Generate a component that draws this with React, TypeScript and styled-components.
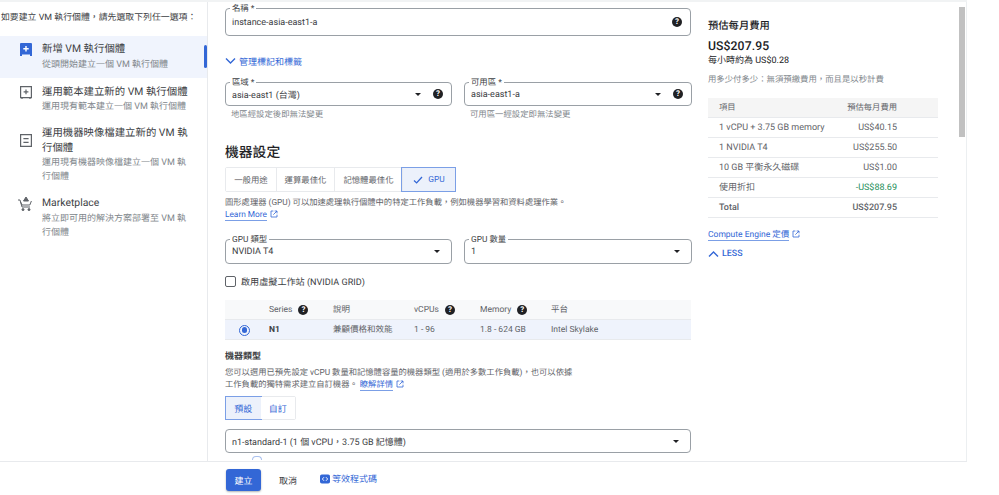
import React from "react";
import styled, { createGlobalStyle } from "styled-components";

const Global = createGlobalStyle`
  html, body { margin: 0; padding: 0; background: #fff; }
  body { font-family: Roboto, "Noto Sans CJK TC", sans-serif; color: #3c4043; text-rendering: geometricPrecision; }
  * { box-sizing: border-box; }
`;

const Page = styled.div`
  position: relative;
  width: 999px;
  height: 495px;
  overflow: hidden;
  display: flex;
  flex-direction: column;
  background: #fff;
`;
const TopStrip = styled.div`
  height: 2px;
  width: 967px;
  flex: none;
  background: #f1f3f4;
`;
const Shell = styled.div`
  width: 967px;
  flex: 1;
  min-height: 0;
  display: grid;
  grid-template-columns: 208px 500px 1fr;
  border-right: 1px solid #eceff1;
  overflow: hidden;
`;
const Sidebar = styled.aside`
  border-right: 1px solid #e8eaed;
  padding-top: 9px;
`;
const SideTitle = styled.div`
  font-size: 8.9px;
  line-height: 14px;
  color: #3c4043;
  padding-left: 1px;
  white-space: nowrap;
`;
const SideList = styled.div`
  margin-top: 11px;
  display: flex;
  flex-direction: column;
`;
const SideItem = styled.div<{ $active?: boolean }>`
  position: relative;
  display: grid;
  grid-template-columns: 42px 1fr;
  padding: ${(p) => (p.$active ? "6px 19px 6px 0" : "7px 19px 5px 0")};
  background: ${(p) => (p.$active ? "#f0f4fd" : "transparent")};
`;
const SideIcon = styled.div<{ $mt?: number }>`
  display: flex;
  justify-content: center;
  align-items: flex-start;
  padding: ${(p) => p.$mt ?? 0}px 0 0 9px;
  color: #5f6368;
`;
const ActiveBar = styled.span`
  position: absolute;
  right: 0;
  top: 9px;
  width: 3px;
  height: 23px;
  border-radius: 2px;
  background: #3367d6;
`;
const ItemTitle = styled.div`
  font-size: 10.4px;
  line-height: 14.5px;
  color: #3c4043;
`;
const ItemSub = styled.div`
  font-size: 9px;
  line-height: 14px;
  color: #80868b;
  margin-top: 1px;
`;

const Main = styled.main`
  padding: 6px 17px 0 17px;
  min-width: 0;
  overflow: hidden;
`;
const FieldBox = styled.div<{ $h: number }>`
  position: relative;
  height: ${(p) => p.$h}px;
  border: 1px solid #9aa0a6;
  border-radius: 4px;
  display: flex;
  align-items: center;
  padding: 0 8px 0 6px;
  gap: 9px;
  font-size: 9px;
  color: #3c4043;
  background: #fff;
`;
const FieldLabel = styled.span`
  position: absolute;
  left: 4px;
  top: -4px;
  padding: 0 2px;
  font-size: 8.4px;
  line-height: 9px;
  background: #fff;
  color: #3c4043;
`;
const FieldValue = styled.span`
  flex: 1;
  white-space: nowrap;
  padding-top: 1px;
`;
const Caret = styled.span`
  width: 0;
  height: 0;
  border-left: 3.5px solid transparent;
  border-right: 3.5px solid transparent;
  border-top: 3.5px solid #202124;
  margin-right: 3px;
`;
const HelpBadge = styled.span`
  flex: none;
  width: 10px;
  height: 10px;
  border-radius: 50%;
  background: #202124;
  color: #fff;
  font-size: 8px;
  font-weight: 700;
  line-height: 10px;
  text-align: center;
  font-family: Roboto, sans-serif;
`;
const DisclosureLink = styled.div`
  margin-top: 18px;
  display: flex;
  align-items: center;
  gap: 3px;
  height: 14px;
  font-size: 9px;
  color: #3367d6;
`;
const TwoCol = styled.div<{ $mt: number }>`
  margin-top: ${(p) => p.$mt}px;
  display: grid;
  grid-template-columns: 227px 228px;
  gap: 12px;
`;
const Hint = styled.div`
  font-size: 8.4px;
  line-height: 12px;
  color: #80868b;
  margin: 3px 0 0 6px;
`;
const SectionTitle = styled.h2`
  margin: 22px 0 0;
  font-size: 13.8px;
  line-height: 20px;
  font-weight: 500;
  color: #202124;
`;
const Tabs = styled.div`
  margin-top: 4px;
  display: inline-flex;
  height: 25px;
  border: 1px solid #e8eaed;
  border-radius: 2px;
  vertical-align: top;
`;
const Tab = styled.div<{ $w: number; $on?: boolean }>`
  width: ${(p) => p.$w}px;
  display: flex;
  align-items: center;
  justify-content: center;
  gap: 5px;
  font-size: 8.4px;
  color: ${(p) => (p.$on ? "#3367d6" : "#5f6368")};
  border-left: 1px solid #e8eaed;
  background: ${(p) => (p.$on ? "#ecf1fb" : "#fff")};
  outline: ${(p) => (p.$on ? "1px solid #7b9fe6" : "none")};
  &:first-child { border-left: 0; }
`;
const Desc = styled.div`
  font-size: 8.3px;
  line-height: 11.5px;
  color: #5f6368;
`;
const DescGpu = styled(Desc)`
  margin-top: 6px;
`;
const DocLink = styled.span`
  color: #3367d6;
  border-bottom: 1px solid #7b9fe6;
`;
const ExtIcon = styled.span`
  display: inline-flex;
  vertical-align: -1px;
  margin-left: 3px;
  color: #3367d6;
`;
const CheckRow = styled.label`
  margin-top: 10px;
  display: flex;
  align-items: center;
  gap: 5px;
  height: 14px;
  font-size: 9.1px;
  color: #3c4043;
`;
const Check = styled.span`
  width: 11px;
  height: 11px;
  border: 1.2px solid #5f6368;
  border-radius: 2px;
`;
const SeriesTable = styled.div`
  margin-top: 12px;
  width: 466px;
`;
const SeriesRow = styled.div<{ $head?: boolean }>`
  display: grid;
  grid-template-columns: 44px 64px 81px 66px 71px 1fr;
  align-items: center;
  height: 20px;
  padding-top: 1px;
  font-size: 8.5px;
  line-height: 12px;
  color: #5f6368;
  background: ${(p) => (p.$head ? "#f8f9fa" : "#eff3fc")};
  border-bottom: 1px solid #e8eaed;
`;
const SeriesCell = styled.div`
  display: flex;
  align-items: center;
  gap: 6px;
  white-space: nowrap;
`;
const SeriesName = styled(SeriesCell)`
  font-weight: 700;
  color: #3c4043;
`;
const Radio = styled.span`
  justify-self: start;
  margin-left: 14px;
  width: 11px;
  height: 11px;
  border-radius: 50%;
  border: 1.3px solid #3367d6;
  display: flex;
  align-items: center;
  justify-content: center;
  &::after {
    content: "";
    width: 5.5px;
    height: 5.5px;
    border-radius: 50%;
    background: #3367d6;
  }
`;
const SubTitle = styled.div`
  margin-top: 11px;
  font-size: 9px;
  line-height: 13px;
  font-weight: 700;
  color: #3c4043;
`;
const DescType = styled(Desc)`
  margin-top: 4px;
  line-height: 11.7px;
`;
const Toggle = styled.div`
  margin-top: 5px;
  display: flex;
  width: 71px;
  height: 24px;
  border: 1px solid #e8eaed;
  border-radius: 2px;
`;
const ToggleBtn = styled.div<{ $on?: boolean }>`
  flex: 1;
  display: flex;
  align-items: center;
  justify-content: center;
  font-size: 9px;
  color: #3367d6;
  background: ${(p) => (p.$on ? "#ecf1fb" : "#fff")};
  outline: ${(p) => (p.$on ? "1px solid #7b9fe6" : "none")};
`;
const TypeField = styled(FieldBox)`
  margin-top: 9px;
`;
const Arc = styled.div`
  margin: 3px 0 0 27px;
  width: 10px;
  height: 4px;
  border: 1px solid #a9c0ee;
  border-bottom: 0;
  border-radius: 5px 5px 0 0;
`;

const Summary = styled.section`
  padding: 17px 0 0 0;
  position: relative;
`;
const SummaryTitle = styled.div`
  font-size: 10.3px;
  line-height: 14px;
  color: #202124;
  font-weight: 500;
`;
const Price = styled.div`
  margin-top: 5px;
  font-size: 12.2px;
  line-height: 16px;
  font-weight: 500;
  color: #202124;
  letter-spacing: 0.1px;
`;
const PerHour = styled.div`
  font-size: 9px;
  line-height: 13px;
  margin-top: 1px;
  color: #202124;
`;
const Note = styled.div`
  margin-top: 6px;
  font-size: 8.4px;
  line-height: 12px;
  color: #80868b;
`;
const CostTable = styled.div`
  margin-top: 12px;
  width: 230px;
`;
const CostRow = styled.div<{ $head?: boolean; $bold?: boolean }>`
  height: 20px;
  display: flex;
  justify-content: space-between;
  align-items: center;
  padding: 0 41px 0 11px;
  font-size: ${(p) => (p.$head ? 8.3 : 9)}px;
  line-height: 12px;
  color: #5f6368;
  font-weight: ${(p) => (p.$bold ? 500 : 400)};
  background: ${(p) => (p.$head ? "#f5f5f5" : "#fff")};
  border-bottom: 1px solid #e8eaed;
`;
const Green = styled.span`
  color: #1e8e5a;
`;
const PriceLink = styled.div`
  margin-top: 11px;
  font-size: 8.5px;
  line-height: 12px;
`;
const LessRow = styled.div`
  margin-top: 7px;
  display: flex;
  align-items: center;
  gap: 3px;
  font-size: 8.9px;
  font-weight: 500;
  color: #3367d6;
  height: 12px;
`;
const Scrollbar = styled.div`
  position: absolute;
  left: 959px;
  top: 7px;
  width: 6px;
  height: 130px;
  background: #c1c1c1;
`;
const BottomBar = styled.footer`
  position: absolute;
  left: 0;
  bottom: 0;
  width: 967px;
  height: 34px;
  background: #fff;
  border-top: 1px solid #e8eaed;
  display: flex;
  align-items: center;
  padding: 3px 0 0 226px;
`;
const Primary = styled.div`
  width: 35px;
  height: 22px;
  border-radius: 3px;
  background: #3367d6;
  color: #fff;
  font-size: 9px;
  display: flex;
  align-items: center;
  justify-content: center;
  box-shadow: 0 1px 2px rgba(60, 64, 67, 0.4);
`;
const Ghost = styled.div`
  margin: 0 0 0 18px;
  width: 18px;
  font-size: 9px;
  white-space: nowrap;
  color: #3c4043;
`;
const CodeLink = styled.div`
  margin: -3px 0 0 23px;
  display: flex;
  align-items: center;
  gap: 2px;
  font-size: 9px;
  color: #3367d6;
`;

const Ext = () => (
  <ExtIcon>
    <svg width="8" height="8" viewBox="0 0 24 24" fill="none" stroke="currentColor" strokeWidth="2.4">
      <path d="M10 3H3v18h18v-7M14 3h7v7M21 3L10 14" />
    </svg>
  </ExtIcon>
);
const Chevron = ({ up }: { up?: boolean }) => (
  <svg width="11" height="8" viewBox="0 0 11 8" fill="none" stroke="#3367d6" strokeWidth="1.4">
    <path d={up ? "M1 6.5l4.5-4.5L10 6.5" : "M1 1.5l4.5 4.5L10 1.5"} />
  </svg>
);
const Help = () => <HelpBadge>?</HelpBadge>;

const IconNew = () => (
  <svg width="14" height="15" viewBox="0 0 14 15">
    <path d="M1 2.2C1 1.5 1.5 1 2.2 1h9.6c.7 0 1.2.5 1.2 1.2V14h-2v-1.6H3V14H1z" fill="#3367d6" />
    <path d="M7 4v5.4M4.3 6.7h5.4" stroke="#fff" strokeWidth="1.4" />
  </svg>
);
const IconTemplate = () => (
  <svg width="14" height="15" viewBox="0 0 14 15" fill="none" stroke="#5f6368" strokeWidth="1.2">
    <path d="M1.6 1.6h10.8v11H1.6zM3 12.6V14M11 12.6V14" />
    <path d="M7 4.4v4.8M4.6 6.8h4.8" />
  </svg>
);
const IconImage = () => (
  <svg width="14" height="15" viewBox="0 0 14 15" fill="none" stroke="#5f6368" strokeWidth="1.2">
    <path d="M1.6 1.6h10.8v11.8H1.6z" />
    <path d="M4.4 5.6h5.2M4.4 9.4h5.2" strokeWidth="1.3" />
  </svg>
);
const IconCart = () => (
  <svg width="17" height="16" viewBox="0 0 17 16" fill="none" stroke="#5f6368" strokeWidth="1">
    <path d="M1 4h2l2 7h8" />
    <path d="M3.6 6l1.4 3h7.8l1.6-4" />
    <circle cx="6" cy="13.6" r="1" fill="#5f6368" />
    <circle cx="12" cy="13.6" r="1" fill="#5f6368" />
    <path d="M6.5 5L9 1l2.5 4z" fill="#5f6368" />
  </svg>
);

export default function App() {
  return (
    <Page>
      <Global />
      <TopStrip />
      <Shell>
        <Sidebar>
          <SideTitle>如要建立 VM 執行個體，請先選取下列任一選項：</SideTitle>
          <SideList>
            <SideItem $active>
              <SideIcon><IconNew /></SideIcon>
              <div>
                <ItemTitle>新增 VM 執行個體</ItemTitle>
                <ItemSub>從頭開始建立一個 VM 執行個體</ItemSub>
              </div>
              <ActiveBar />
            </SideItem>
            <SideItem>
              <SideIcon><IconTemplate /></SideIcon>
              <div>
                <ItemTitle>運用範本建立新的 VM 執行個體</ItemTitle>
                <ItemSub>運用現有範本建立一個 VM 執行個體</ItemSub>
              </div>
            </SideItem>
            <SideItem>
              <SideIcon $mt={7}><IconImage /></SideIcon>
              <div>
                <ItemTitle>運用機器映像檔建立新的 VM 執行個體</ItemTitle>
                <ItemSub>運用現有機器映像檔建立一個 VM 執行個體</ItemSub>
              </div>
            </SideItem>
            <SideItem>
              <SideIcon><IconCart /></SideIcon>
              <div>
                <ItemTitle>Marketplace</ItemTitle>
                <ItemSub>將立即可用的解決方案部署至 VM 執行個體</ItemSub>
              </div>
            </SideItem>
          </SideList>
        </Sidebar>
        <Main>
          <FieldBox $h={28}>
            <FieldLabel>名稱 *</FieldLabel>
            <FieldValue>instance-asia-east1-a</FieldValue>
            <Help />
          </FieldBox>
          <DisclosureLink><Chevron />管理標記和標籤</DisclosureLink>
          <TwoCol $mt={14}>
            <div>
              <FieldBox $h={24}>
                <FieldLabel>區域 *</FieldLabel>
                <FieldValue>asia-east1 (台灣)</FieldValue>
                <Caret />
                <Help />
              </FieldBox>
              <Hint>地區經設定後即無法變更</Hint>
            </div>
            <div>
              <FieldBox $h={24}>
                <FieldLabel>可用區 *</FieldLabel>
                <FieldValue>asia-east1-a</FieldValue>
                <Caret />
                <Help />
              </FieldBox>
              <Hint>可用區一經設定即無法變更</Hint>
            </div>
          </TwoCol>
          <SectionTitle>機器設定</SectionTitle>
          <Tabs>
            <Tab $w={50}>一般用途</Tab>
            <Tab $w={58}>運算最佳化</Tab>
            <Tab $w={68}>記憶體最佳化</Tab>
            <Tab $w={53} $on>
              <svg width="10" height="8" viewBox="0 0 10 8" fill="none" stroke="#3367d6" strokeWidth="1.3">
                <path d="M1 4.5l2.6 2.4L9 1" />
              </svg>
              GPU
            </Tab>
          </Tabs>
          <DescGpu>
            圖形處理器 (GPU) 可以加速處理執行個體中的特定工作負載，例如機器學習和資料處理作業。
            <br />
            <DocLink>Learn More</DocLink>
            <Ext />
          </DescGpu>
          <TwoCol $mt={18}>
            <FieldBox $h={25}>
              <FieldLabel>GPU 類型</FieldLabel>
              <FieldValue>NVIDIA T4</FieldValue>
              <Caret />
            </FieldBox>
            <FieldBox $h={25}>
              <FieldLabel>GPU 數量</FieldLabel>
              <FieldValue>1</FieldValue>
              <Caret />
            </FieldBox>
          </TwoCol>
          <CheckRow><Check />啟用虛擬工作站 (NVIDIA GRID)</CheckRow>
          <SeriesTable>
            <SeriesRow $head>
              <span />
              <SeriesCell>Series <Help /></SeriesCell>
              <SeriesCell>說明</SeriesCell>
              <SeriesCell>vCPUs <Help /></SeriesCell>
              <SeriesCell>Memory <Help /></SeriesCell>
              <SeriesCell>平台</SeriesCell>
            </SeriesRow>
            <SeriesRow>
              <Radio />
              <SeriesName>N1</SeriesName>
              <SeriesCell>兼顧價格和效能</SeriesCell>
              <SeriesCell>1 - 96</SeriesCell>
              <SeriesCell>1.8 - 624 GB</SeriesCell>
              <SeriesCell>Intel Skylake</SeriesCell>
            </SeriesRow>
          </SeriesTable>
          <SubTitle>機器類型</SubTitle>
          <DescType>
            您可以選用已預先設定 vCPU 數量和記憶體容量的機器類型 (適用於多數工作負載)，也可以依據
            <br />
            工作負載的獨特需求建立自訂機器。 <DocLink>瞭解詳情</DocLink>
            <Ext />
          </DescType>
          <Toggle>
            <ToggleBtn $on>預設</ToggleBtn>
            <ToggleBtn>自訂</ToggleBtn>
          </Toggle>
          <TypeField $h={24}>
            <FieldValue>n1-standard-1 (1 個 vCPU，3.75 GB 記憶體)</FieldValue>
            <Caret />
          </TypeField>
          <Arc />
        </Main>
        <Summary>
          <SummaryTitle>預估每月費用</SummaryTitle>
          <Price>US$207.95</Price>
          <PerHour>每小時約為 US$0.28</PerHour>
          <Note>用多少付多少：無須預繳費用，而且是以秒計費</Note>
          <CostTable>
            <CostRow $head><span>項目</span><span>預估每月費用</span></CostRow>
            <CostRow><span>1 vCPU + 3.75 GB memory</span><span>US$40.15</span></CostRow>
            <CostRow><span>1 NVIDIA T4</span><span>US$255.50</span></CostRow>
            <CostRow><span>10 GB 平衡永久磁碟</span><span>US$1.00</span></CostRow>
            <CostRow><span>使用折扣</span><Green>-US$88.69</Green></CostRow>
            <CostRow $bold><span>Total</span><span>US$207.95</span></CostRow>
          </CostTable>
          <PriceLink><DocLink>Compute Engine 定價</DocLink><Ext /></PriceLink>
          <LessRow><Chevron up />LESS</LessRow>
        </Summary>
      </Shell>
      <Scrollbar />
      <BottomBar>
        <Primary>建立</Primary>
        <Ghost>取消</Ghost>
        <CodeLink>
          <svg width="10" height="10" viewBox="0 0 11 10">
            <rect width="11" height="10" rx="2" fill="#3367d6" />
            <path d="M4.4 3L2.6 5l1.8 2M6.6 3l1.8 2-1.8 2" stroke="#fff" strokeWidth="1" fill="none" />
          </svg>
          等效程式碼
        </CodeLink>
      </BottomBar>
    </Page>
  );
}
